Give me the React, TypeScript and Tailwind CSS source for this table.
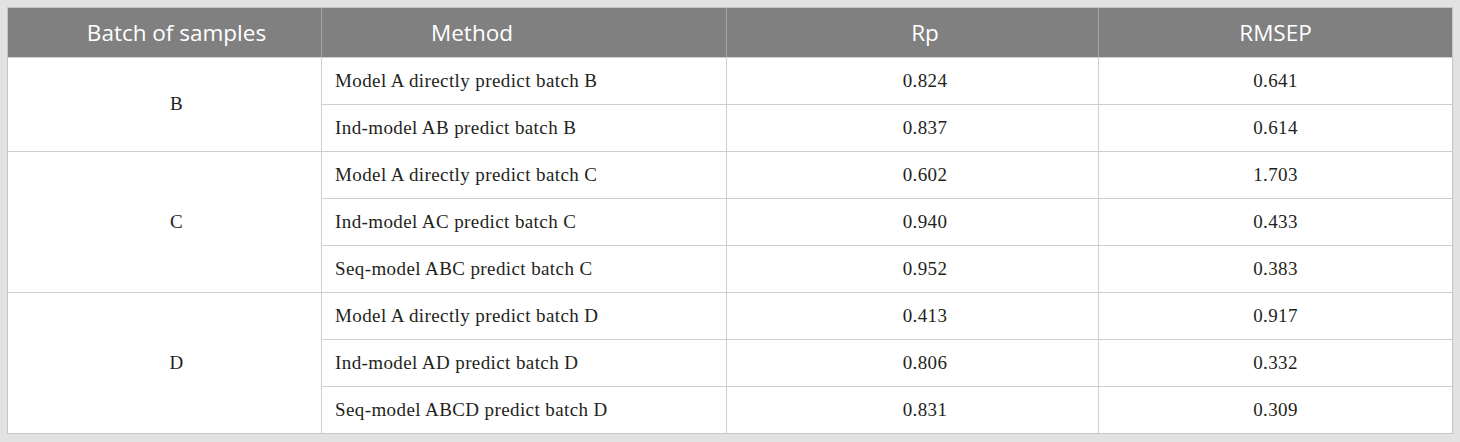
import React from 'react'

type Row = { method: string; rp: string; rmsep: string }
type Group = { batch: string; rows: Row[] }

const groups: Group[] = [
  {
    batch: 'B',
    rows: [
      { method: 'Model A directly predict batch B', rp: '0.824', rmsep: '0.641' },
      { method: 'Ind-model AB predict batch B', rp: '0.837', rmsep: '0.614' },
    ],
  },
  {
    batch: 'C',
    rows: [
      { method: 'Model A directly predict batch C', rp: '0.602', rmsep: '1.703' },
      { method: 'Ind-model AC predict batch C', rp: '0.940', rmsep: '0.433' },
      { method: 'Seq-model ABC predict batch C', rp: '0.952', rmsep: '0.383' },
    ],
  },
  {
    batch: 'D',
    rows: [
      { method: 'Model A directly predict batch D', rp: '0.413', rmsep: '0.917' },
      { method: 'Ind-model AD predict batch D', rp: '0.806', rmsep: '0.332' },
      { method: 'Seq-model ABCD predict batch D', rp: '0.831', rmsep: '0.309' },
    ],
  },
]

const span: Record<number, string> = { 2: 'row-span-2', 3: 'row-span-3' }

const head = "h-[49px] bg-[#808080] text-white text-[22.5px] flex items-center justify-center font-['Open_Sans',sans-serif]"
const body = "text-[19px] tracking-[0.4px] text-[#231f20] font-['Liberation_Serif',serif]"
const cell = `h-[47px] border-t border-[#cfcfcf] flex items-center ${body}`

export default function App() {
  return (
    <div className="w-[1460px] h-[442px] bg-[#e2e2e2] p-[7px]">
      <div className="w-[1446px] border border-[#c6c6c6] bg-white grid grid-cols-[313px_405px_372px_354px]">
        <div className={head + ' pl-[24px]'}>Batch of samples</div>
        <div className={head + ' border-l border-[#a3a3a3] pr-[104px]'}>Method</div>
        <div className={head + ' border-l border-[#a3a3a3] pl-[25px]'}>Rp</div>
        <div className={head + ' border-l border-[#a3a3a3]'}>RMSEP</div>

        {groups.map((g) => (
          <React.Fragment key={g.batch}>
            <div className={`${span[g.rows.length]} border-t border-[#cfcfcf] flex items-center justify-center pl-[24px] ${body}`}>
              {g.batch}
            </div>
            {g.rows.map((r) => (
              <React.Fragment key={r.method}>
                <div className={cell + ' border-l pl-[13px]'}>{r.method}</div>
                <div className={cell + ' border-l justify-center pl-[25px]'}>{r.rp}</div>
                <div className={cell + ' border-l justify-center'}>{r.rmsep}</div>
              </React.Fragment>
            ))}
          </React.Fragment>
        ))}
      </div>
    </div>
  )
}
